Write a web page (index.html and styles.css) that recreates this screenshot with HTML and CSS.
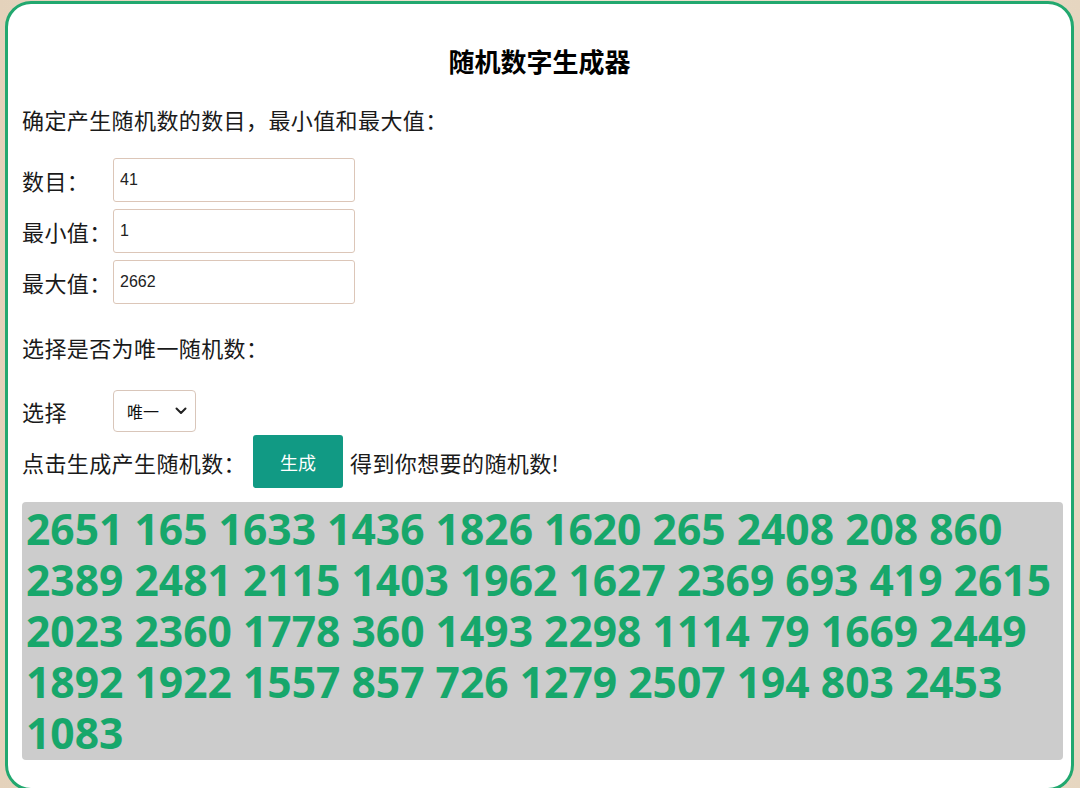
FILE: index.html
```html
<!DOCTYPE html>
<html lang="zh-CN">
<head>
<meta charset="utf-8">
<title>随机数字生成器</title>
<link rel="stylesheet" href="styles.css">
</head>
<body>
<div class="card">
  <h1 class="title">随机数字生成器</h1>
  <p class="intro">确定产生随机数的数目，最小值和最大值：</p>
  <div class="fields">
    <div class="field"><label class="field-label">数目：</label><input class="field-input" type="text" value="41"></div>
    <div class="field"><label class="field-label">最小值：</label><input class="field-input" type="text" value="1"></div>
    <div class="field"><label class="field-label">最大值：</label><input class="field-input" type="text" value="2662"></div>
  </div>
  <p class="unique-q">选择是否为唯一随机数：</p>
  <div class="select-row">
    <label class="field-label">选择</label>
    <div class="select-wrap">
      <select class="select"><option>唯一</option><option>不唯一</option></select>
      <svg class="chevron" width="12" height="8" viewBox="0 0 12 8"><path d="M1.5 1.5 L6 6 L10.5 1.5" fill="none" stroke="#222" stroke-width="2" stroke-linecap="round" stroke-linejoin="round"/></svg>
    </div>
  </div>
  <div class="action-row">
    <span class="action-label">点击生成产生随机数：</span>
    <button class="gen-btn" type="button">生成</button>
    <span class="action-after">得到你想要的随机数!</span>
  </div>
  <div class="output">2651 165 1633 1436 1826 1620 265 2408 208 860 2389 2481 2115 1403 1962 1627 2369 693 419 2615 2023 2360 1778 360 1493 2298 1114 79 1669 2449 1892 1922 1557 857 726 1279 2507 194 803 2453 1083</div>
</div>
</body>
</html>
```
FILE: styles.css
```css
html, body {
  margin: 0;
  padding: 0;
}
body {
  width: 1080px;
  height: 788px;
  overflow: hidden;
  background: linear-gradient(90deg, #e4d2bb 0%, #efe5d3 50%, #e6d6c0 100%);
  font-family: "Noto Sans CJK SC", "Liberation Sans", sans-serif;
  color: #1a1a1a;
}
.card {
  box-sizing: border-box;
  margin: 1px 6px 0 5px;
  height: 790px;
  border: 3px solid #22a86f;
  border-radius: 26px;
  background: #fff;
  padding: 42px 8px 0 14px;
  display: flex;
  flex-direction: column;
}
.title {
  margin: 0 6px 0 0;
  font-size: 26px;
  line-height: 30px;
  font-weight: 700;
  text-align: center;
  color: #000;
}
.intro, .unique-q {
  margin: 29px 0 0;
  font-size: 22px;
  letter-spacing: 0.4px;
  line-height: 28px;
}
.fields {
  margin-top: 25px;
  display: flex;
  flex-direction: column;
  gap: 7px;
}
.field, .select-row {
  display: flex;
  align-items: center;
}
.field-label {
  width: 91px;
  flex: none;
  font-size: 22px;
  letter-spacing: 0.4px;
  line-height: 28px;
}
.field-input {
  box-sizing: border-box;
  width: 242px;
  height: 44px;
  border: 1px solid #dcc6b8;
  border-radius: 3px;
  padding: 0 6px;
  font-family: "Liberation Sans", Arial, sans-serif;
  font-size: 16px;
  color: #222;
  background: #fff;
  outline: none;
}
.select-row {
  margin-top: 29px;
}
.select-wrap {
  position: relative;
  width: 83px;
  height: 42px;
}
.select {
  appearance: none;
  -webkit-appearance: none;
  box-sizing: border-box;
  width: 83px;
  height: 42px;
  border: 1px solid #d9c6ba;
  border-radius: 4px;
  background: #fff;
  padding: 0 0 0 13px;
  font-family: "Noto Sans CJK SC", sans-serif;
  font-size: 16px;
  color: #111;
  outline: none;
}
.chevron {
  position: absolute;
  right: 9px;
  top: 17px;
  pointer-events: none;
}
.action-row {
  margin-top: 3px;
  display: flex;
  align-items: center;
  font-size: 22px;
  letter-spacing: 0.4px;
  line-height: 28px;
}
.gen-btn {
  margin-left: 7px;
  width: 90px;
  height: 53px;
  border: none;
  border-radius: 3px;
  background: #119a84;
  color: #fff;
  font-family: "Noto Sans CJK SC", sans-serif;
  font-size: 18px;
  letter-spacing: 0;
  cursor: pointer;
}
.action-after {
  margin-left: 7px;
}
.output {
  margin-top: 14px;
  background: #cccccc;
  border-radius: 4px;
  padding: 1px 4px 2px;
  font-family: "Open Sans", "Noto Sans", sans-serif;
  font-weight: 700;
  font-size: 42.6px;
  line-height: 51px;
  color: #17a76b;
}
```
